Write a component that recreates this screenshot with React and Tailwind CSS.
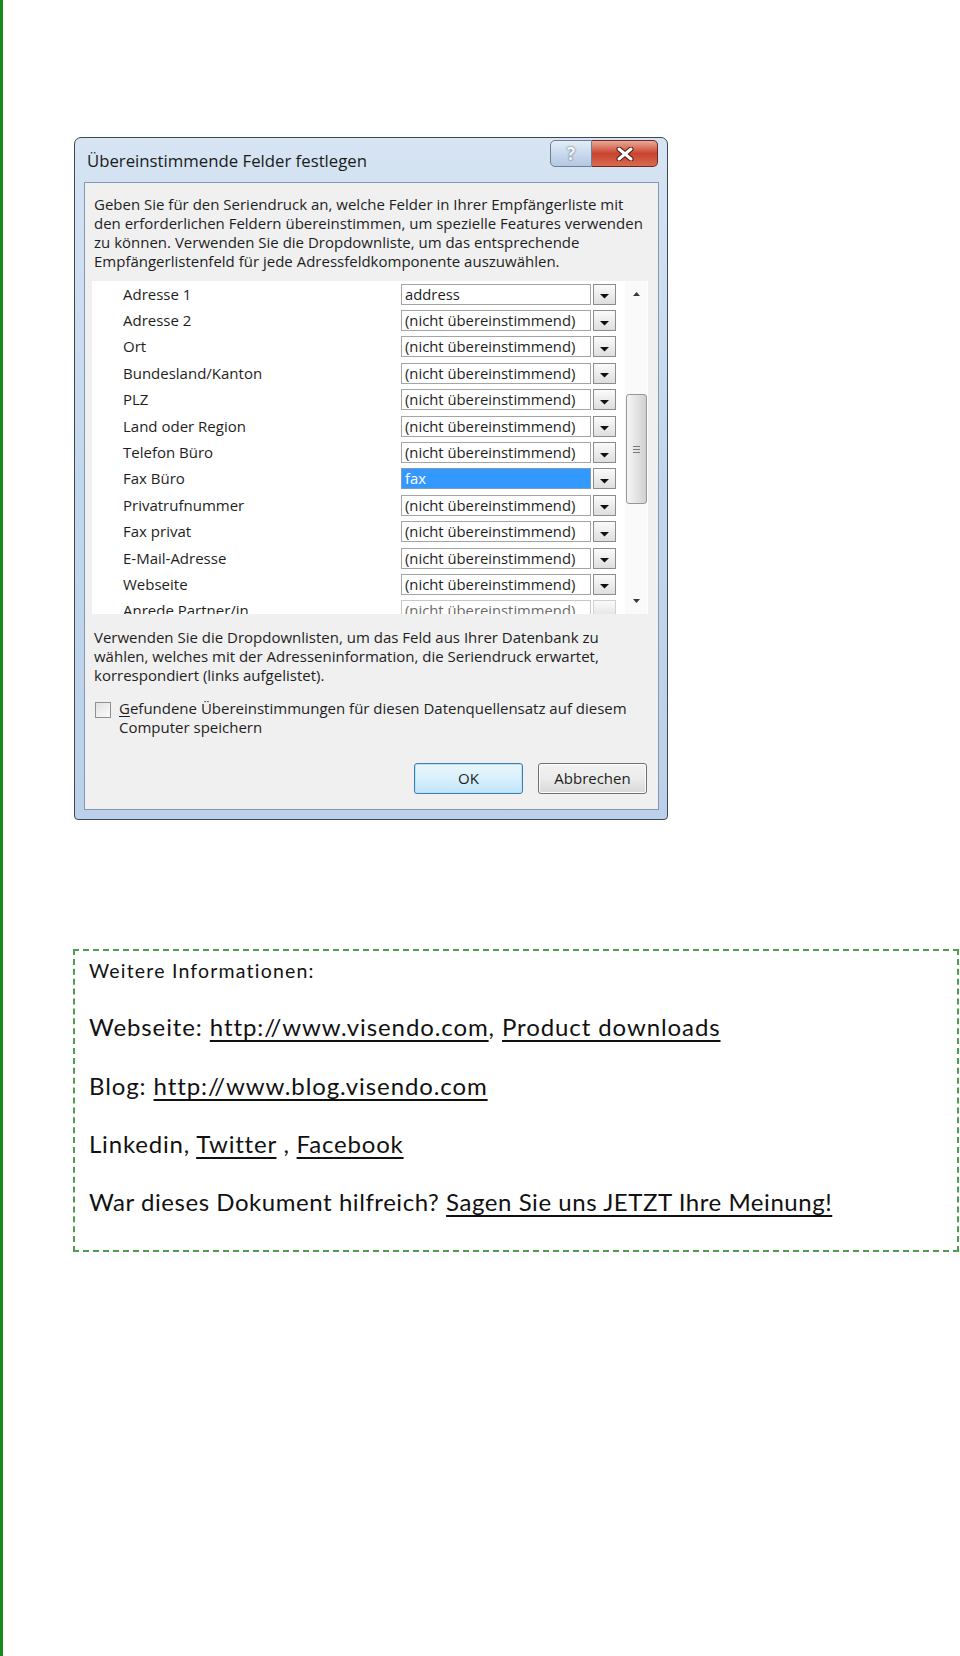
import React from 'react';

const NONE = '(nicht übereinstimmend)';

const rows = [
  { label: 'Adresse 1', value: 'address' },
  { label: 'Adresse 2', value: NONE },
  { label: 'Ort', value: NONE },
  { label: 'Bundesland/Kanton', value: NONE },
  { label: 'PLZ', value: NONE },
  { label: 'Land oder Region', value: NONE },
  { label: 'Telefon Büro', value: NONE },
  { label: 'Fax Büro', value: 'fax', selected: true },
  { label: 'Privatrufnummer', value: NONE },
  { label: 'Fax privat', value: NONE },
  { label: 'E-Mail-Adresse', value: NONE },
  { label: 'Webseite', value: NONE },
  { label: 'Anrede Partner/in', value: NONE, faded: true },
];

function DropArrow() {
  return (
    <svg width="9" height="5" viewBox="0 0 9 5" className="mt-[5px]">
      <polygon points="0,0 9,0 4.5,4.5" fill="#111" />
    </svg>
  );
}

function Combo({ value, selected, faded }) {
  return (
    <div className="flex h-[21px] items-stretch gap-[2px]">
      <div
        className={`w-[190px] border px-[3px] text-[14.8px] leading-[19px] whitespace-nowrap overflow-hidden ${
          selected
            ? 'bg-[#3399ff] text-white border-[#7a9cc4]'
            : faded
            ? 'bg-white text-[#6a6a6a] border-[#c8c8c8]'
            : 'bg-white text-[#1e1e1e] border-[#a5a5a5]'
        }`}
      >
        {value}
      </div>
      <div
        className={`w-[23px] flex items-center justify-center border bg-gradient-to-b from-[#fbfbfb] to-[#dedede] ${
          faded ? 'border-[#d0d0d0]' : 'border-[#8c8c8c]'
        }`}
      >
        {!faded && <DropArrow />}
      </div>
    </div>
  );
}

function Scrollbar() {
  return (
    <div className="w-[22px] flex flex-col items-center bg-[#fafafa]">
      <div className="h-[26px] flex items-center justify-center">
        <svg width="7" height="4" viewBox="0 0 7 4">
          <polygon points="0,4 7,4 3.5,0" fill="#3a3a3a" />
        </svg>
      </div>
      <div className="mt-[87px] h-[110px] w-[21px] rounded-[3px] border border-[#979797] bg-gradient-to-r from-[#f4f4f4] via-[#e4e4e4] to-[#d0d0d0] flex items-center justify-center">
        <div className="flex flex-col gap-[2px] w-[7px]">
          <div className="h-px bg-[#7a7a7a]" />
          <div className="h-px bg-[#7a7a7a]" />
          <div className="h-px bg-[#7a7a7a]" />
        </div>
      </div>
      <div className="flex-1" />
      <div className="h-[26px] flex items-center justify-center">
        <svg width="7" height="4" viewBox="0 0 7 4">
          <polygon points="0,0 7,0 3.5,4" fill="#3a3a3a" />
        </svg>
      </div>
    </div>
  );
}

function Dialog() {
  return (
    <div className="w-[594px] h-[683px] rounded-t-[7px] rounded-b-[4px] border border-[#3b4857] bg-gradient-to-b from-[#d6e4f3] via-[#c3d7ec] to-[#bcd1e9] flex flex-col font-['Open_Sans',sans-serif] text-[#1e1e1e]">
      <div className="h-[44px] flex items-start">
        <div className="pl-[12px] pt-[12px] text-[16.75px] leading-[22px] text-[#1a1a1a]">
          Übereinstimmende Felder festlegen
        </div>
        <div className="ml-auto mr-[9px] mt-[2px] flex">
          <div className="w-[42px] h-[27px] rounded-l-[5px] border border-[#6d7f95] bg-gradient-to-b from-[#e3edf8] via-[#c9daee] to-[#b3c8e2] flex items-center justify-center text-[17px] font-bold text-[#f5f8fc] [text-shadow:0_0_2px_#2b3a4d]">
            ?
          </div>
          <div className="w-[66px] h-[27px] rounded-r-[5px] border border-l-0 border-[#6b2a20] bg-gradient-to-b from-[#e9a898] via-[#c9432f] to-[#d86a4f] flex items-center justify-center">
            <svg width="20" height="14" viewBox="0 0 20 14">
              <path d="M4 2 L16 12 M16 2 L4 12" stroke="#4a1a12" strokeWidth="5" strokeLinecap="round" />
              <path d="M4 2 L16 12 M16 2 L4 12" stroke="#ffffff" strokeWidth="3" strokeLinecap="round" />
            </svg>
          </div>
        </div>
      </div>

      <div className="ml-[9px] mr-[8px] mb-[9px] flex-1 border border-[#8398b2] bg-[#f0f0f0] flex flex-col">
        <p className="pl-[9px] pt-[12px] text-[15px] leading-[19px] whitespace-nowrap">
          Geben Sie für den Seriendruck an, welche Felder in Ihrer Empfängerliste mit
          <br />
          den erforderlichen Feldern übereinstimmen, um spezielle Features verwenden
          <br />
          zu können. Verwenden Sie die Dropdownliste, um das entsprechende
          <br />
          Empfängerlistenfeld für jede Adressfeldkomponente auszuwählen.
        </p>

        <div className="mt-[10px] ml-[7px] w-[556px] h-[333px] bg-white flex overflow-hidden">
          <div className="flex flex-col">
            {rows.map((r) => (
              <div key={r.label} className="h-[26.4px] shrink-0 flex items-center">
                <div className="w-[309px] pl-[31px] text-[15px] leading-[19px]">{r.label}</div>
                <Combo value={r.value} selected={r.selected} faded={r.faded} />
              </div>
            ))}
          </div>
          <div className="w-[9px]" />
          <Scrollbar />
        </div>

        <p className="pl-[9px] mt-[14px] text-[15px] leading-[19px] whitespace-nowrap">
          Verwenden Sie die Dropdownlisten, um das Feld aus Ihrer Datenbank zu
          <br />
          wählen, welches mit der Adresseninformation, die Seriendruck erwartet,
          <br />
          korrespondiert (links aufgelistet).
        </p>

        <div className="mt-[14px] pl-[10px] flex items-start gap-[8px]">
          <div className="mt-[3px] w-[16px] h-[16px] border border-[#8e8f8f] bg-gradient-to-br from-[#e2e2e2] to-[#fbfbfb]" />
          <div className="text-[15px] leading-[19px] whitespace-nowrap">
            <span className="underline underline-offset-2">G</span>efundene Übereinstimmungen für diesen Datenquellensatz auf diesem
            <br />
            Computer speichern
          </div>
        </div>

        <div className="mt-[26px] pr-[11px] flex justify-end gap-[15px]">
          <div className="w-[109px] h-[31px] rounded-[3px] border border-[#3c7fb1] bg-gradient-to-b from-[#eaf6fd] via-[#d9f0fc] to-[#bee6fd] shadow-[inset_0_0_0_1px_#b9e2f7] flex items-center justify-center text-[15px]">
            OK
          </div>
          <div className="w-[109px] h-[31px] rounded-[3px] border border-[#707070] bg-gradient-to-b from-[#f2f2f2] via-[#ebebeb] to-[#d8d8d8] shadow-[inset_0_0_0_1px_#fcfcfc] flex items-center justify-center text-[15px]">
            Abbrechen
          </div>
        </div>
      </div>
    </div>
  );
}

function Link({ children }) {
  return <span className="underline decoration-[1.5px] underline-offset-[4px]">{children}</span>;
}

export default function App() {
  return (
    <div className="w-[960px] min-h-[1656px] bg-white border-l-[3px] border-[#1a8a1a] flex flex-col">
      <div className="pt-[137px] pl-[71px]">
        <Dialog />
      </div>

      <div className="mt-[129px] ml-[70px] w-[886px] border-2 border-dashed border-[#4f9e4f] pl-[14px] pt-[8px] pb-[32px] font-['Lato',sans-serif] text-[#111]">
        <div className="text-[19.5px] tracking-[1.2px] leading-[24px]">Weitere Informationen:</div>
        <div className="mt-[28px] text-[24px] tracking-[0.9px] leading-[32px]">
          Webseite: <Link>http://www.visendo.com</Link>, <Link>Product downloads</Link>
        </div>
        <div className="mt-[27px] text-[24px] tracking-[0.9px] leading-[32px]">
          Blog: <Link>http://www.blog.visendo.com</Link>
        </div>
        <div className="mt-[26px] text-[24px] tracking-[0.8px] leading-[32px]">
          Linkedin, <Link>Twitter</Link> , <Link>Facebook</Link>
        </div>
        <div className="mt-[26px] text-[24px] tracking-[0.55px] leading-[32px]">
          War dieses Dokument hilfreich? <Link>Sagen Sie uns JETZT Ihre Meinung!</Link>
        </div>
      </div>
    </div>
  );
}
